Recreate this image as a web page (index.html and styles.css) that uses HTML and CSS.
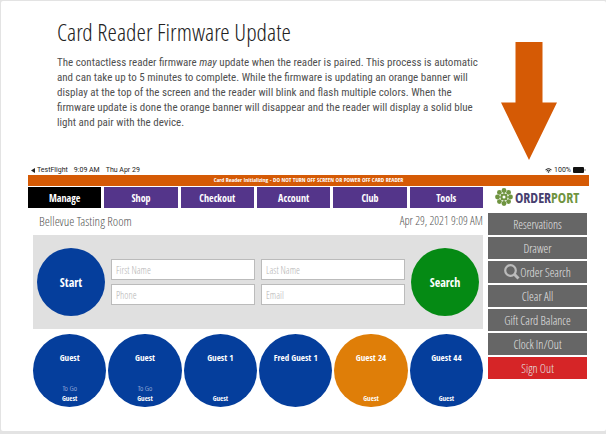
FILE: index.html
```html
<!DOCTYPE html>
<html lang="en">
<head>
	<meta charset="UTF-8">
	<meta name="viewport" content="width=device-width, initial-scale=1">
	<title>Card Reader Firmware Update</title>
	<link rel="stylesheet" href="styles.css">
</head>
<body>
	<main class="card">
		<header class="intro">
			<div class="intro-text">
				<h1 class="title">Card Reader Firmware Update</h1>
				<p class="desc">The contactless reader firmware <em>may</em> update when the reader is paired. This process is automatic<br>
				and can take up to 5 minutes to complete. While the firmware is updating an orange banner will<br>
				display at the top of the screen and the reader will blink and flash multiple colors. When the<br>
				firmware update is done the orange banner will disappear and the reader will display a solid blue<br>
				light and pair with the device.</p>
			</div>
			<svg class="arrow" width="56" height="118" viewBox="0 0 56 118" aria-hidden="true">
				<path d="M14.500 0H41.500V60.500H56L28 118L0 60.500H14.500Z" fill="#d55a05"/>
			</svg>
		</header>
		<section class="device">
			<div class="status">
				<div class="status-left">
					<svg width="4" height="5" viewBox="0 0 4 5" aria-hidden="true"><path d="M4 0V5L0 2.500Z" fill="#222"/></svg>
					<span>TestFlight</span>
					<span class="status-time">9:09 AM</span>
					<span class="status-date">Thu Apr 29</span>
				</div>
				<div class="status-right">
					<svg width="7" height="5" viewBox="0 0 14 10" aria-hidden="true">
						<path d="M1 3.600Q7 -1.600 13 3.600M3.200 6Q7 2.800 10.800 6" fill="none" stroke="#222" stroke-width="2"/>
						<path d="M4.800 7.500Q7 5.800 9.200 7.500L7 10Z" fill="#222"/>
					</svg>
					<span>100%</span>
					<svg width="13" height="6" viewBox="0 0 13 6" aria-hidden="true">
						<rect width="11" height="6" rx="1" fill="#111"/>
						<path d="M12 2V4" stroke="#888"/>
					</svg>
				</div>
			</div>
			<div class="banner">Card Reader Initializing - DO NOT TURN OFF SCREEN OR POWER OFF CARD READER</div>
			<div class="app">
				<div class="main">
					<nav class="tabs">
						<button class="tab tab-active">Manage</button>
						<button class="tab">Shop</button>
						<button class="tab">Checkout</button>
						<button class="tab">Account</button>
						<button class="tab">Club</button>
						<button class="tab">Tools</button>
					</nav>
					<div class="room">
						<span>Bellevue Tasting Room</span>
						<span class="room-date">Apr 29, 2021 9:09 AM</span>
					</div>
					<form class="search">
						<button type="button" class="circle circle-start">Start</button>
						<div class="fields">
							<input type="text" placeholder="First Name" aria-label="First Name">
							<input type="text" placeholder="Last Name" aria-label="Last Name">
							<input type="tel" placeholder="Phone" aria-label="Phone">
							<input type="email" placeholder="Email" aria-label="Email">
						</div>
						<button type="button" class="circle circle-search">Search</button>
					</form>
					<div class="guests">
						<button class="guest"><span class="guest-name">Guest</span><span class="guest-togo">To Go</span><span class="guest-type">Guest</span></button>
						<button class="guest"><span class="guest-name">Guest</span><span class="guest-togo">To Go</span><span class="guest-type">Guest</span></button>
						<button class="guest"><span class="guest-name">Guest 1</span><span class="guest-type">Guest</span></button>
						<button class="guest"><span class="guest-name">Fred Guest 1</span></button>
						<button class="guest guest-orange"><span class="guest-name">Guest 24</span><span class="guest-type">Guest</span></button>
						<button class="guest"><span class="guest-name">Guest 44</span><span class="guest-type">Guest</span></button>
					</div>
				</div>
				<aside class="side">
					<div class="logo">
						<svg width="18" height="18" viewBox="-9 -9 18 18" aria-hidden="true">
							<g stroke="#6f9440" stroke-width="1">
								<path d="M0 -7V7M-7 0H7M-5 -5L5 5M5 -5L-5 5"/>
							</g>
							<g fill="#6f9440">
								<circle cy="-6.500" r="2.400"/>
								<circle cx="4.600" cy="-4.600" r="2.400"/>
								<circle cx="6.500" r="2.400"/>
								<circle cx="4.600" cy="4.600" r="2.400"/>
								<circle cy="6.500" r="2.400"/>
								<circle cx="-4.600" cy="4.600" r="2.400"/>
								<circle cx="-6.500" r="2.400"/>
								<circle cx="-4.600" cy="-4.600" r="2.400"/>
								<circle r="3.600"/>
							</g>
							<circle r="1.500" fill="#fff"/>
						</svg>
						<span class="logo-text">ORDER<span class="logo-port">PORT</span></span>
					</div>
					<button class="side-btn">Reservations</button>
					<button class="side-btn">Drawer</button>
					<button class="side-btn">
						<svg width="16" height="16" viewBox="0 0 16 16" aria-hidden="true">
							<circle cx="6.500" cy="6.500" r="5.300" fill="none" stroke="#bbb" stroke-width="2.200"/>
							<path d="M10.300 10.300L14.500 14.500" stroke="#bbb" stroke-width="3"/>
						</svg>Order Search
					</button>
					<button class="side-btn">Clear All</button>
					<button class="side-btn">Gift Card Balance</button>
					<button class="side-btn">Clock In/Out</button>
					<button class="side-btn side-btn-out">Sign Out</button>
				</aside>
			</div>
		</section>
	</main>
</body>
</html>
```
FILE: styles.css
```css
*{margin:0;padding:0;box-sizing:border-box;}
body{
	padding:1px 0 3px 1px;
	background-color:#e3e3e3;
	font-family:"Open Sans Condensed","Roboto Condensed","Liberation Sans",sans-serif;
}
button,input{font-family:inherit;border:none;}
button{cursor:pointer;color:#fff;}
svg{flex:none;}
.card{
	background-color:#fff;
	border-radius:2px;
	padding:16px 17px 24px 27px;
}
.intro{
	display:flex;
	justify-content:space-between;
	padding:0 32px 0 29px;
}
.title{
	font-size:24px;
	line-height:30px;
	color:#222;
}
.desc{
	margin-top:8px;
	font-family:"Roboto Condensed","Liberation Sans",sans-serif;
	font-size:11px;
	line-height:15px;
	color:#505050;
	white-space:nowrap;
}
.arrow{margin-top:25px;}
.status{
	display:flex;
	justify-content:space-between;
	align-items:center;
	height:10px;
	margin-top:5px;
	padding:0 3px;
	font-family:Roboto,"Liberation Sans",sans-serif;
	font-size:7px;
	line-height:10px;
	color:#222;
}
.status-left,.status-right{
	display:flex;
	align-items:center;
	gap:2px;
}
.status-time{margin-left:4px;}
.status-date{margin-left:4px;}
.banner{
	height:11px;
	background-color:#d55a05;
	color:#fff;
	font-size:6px;
	line-height:11px;
	font-weight:700;
	text-align:center;
}
.app{
	display:flex;
	gap:5px;
	padding-top:1px;
}
.main{flex:1;min-width:0;}
.tabs{
	display:grid;
	grid-template-columns:repeat(6,1fr);
	gap:3px;
}
.tab{
	height:21px;
	background-color:#54358a;
	font-size:10px;
	font-weight:700;
}
.tab-active{background-color:#000;}
.title,.room,.fields input,.guest-togo,.side-btn{
	font-family:"Open Sans Condensed Light","Open Sans Light Condensed","OpenSans-CondensedLight","Roboto Condensed","Liberation Sans",sans-serif;
	font-weight:300;
}
.room{
	display:flex;
	justify-content:space-between;
	padding-left:11px;
	font-size:13px;
	line-height:26px;
	padding-bottom:1px;
	color:#555;
}
.room-date{font-size:12px;}
.search{
	display:flex;
	align-items:center;
	gap:6px;
	height:94px;
	margin-left:5px;
	padding:0 4px;
	background-color:#e0e0e0;
}
.circle{
	width:68px;
	height:68px;
	flex:none;
	border-radius:50%;
	font-size:12px;
	font-weight:700;
}
.circle-start{background-color:#053e9c;}
.circle-search{background-color:#058a14;}
.fields{
	flex:1;
	display:grid;
	grid-template-columns:1fr 1fr;
	gap:4px 6px;
}
.fields input{
	width:100%;
	min-width:0;
	height:21px;
	padding:0 4px;
	border:1px solid #bbb;
	background-color:#fff;
	font-size:10px;
}
.fields input::placeholder{color:#b4b4b4;}
.guests{
	display:grid;
	grid-template-columns:repeat(6,1fr);
	gap:2px;
	margin:5px 0 0 5px;
}
.guest{
	display:flex;
	flex-direction:column;
	align-items:center;
	aspect-ratio:1;
	padding:16px 0 3px;
	border-radius:50%;
	background-color:#053e9c;
	font-weight:700;
}
.guest-orange{background-color:#df7e08;}
.guest-name{
	margin-bottom:auto;
	font-size:9px;
	line-height:16px;
}
.guest-togo{
	font-size:8px;
	line-height:10px;
	color:#c3d0ea;
}
.guest-type{
	font-size:7px;
	line-height:11px;
}
.side{
	display:flex;
	flex-direction:column;
	gap:2px;
	width:101px;
	padding-right:2px;
}
.logo{
	display:flex;
	align-items:center;
	gap:2px;
	height:24px;
	padding:0 0 4px 7px;
}
.logo-text{
	font-size:14px;
	font-weight:700;
	color:#47406f;
}
.logo-port{color:#6f9440;}
.side-btn{
	display:flex;
	align-items:center;
	justify-content:center;
	height:22px;
	background-color:#666;
	color:#e4e4e4;
	font-size:12px;
}
.side-btn-out{background-color:#d62527;}
```
